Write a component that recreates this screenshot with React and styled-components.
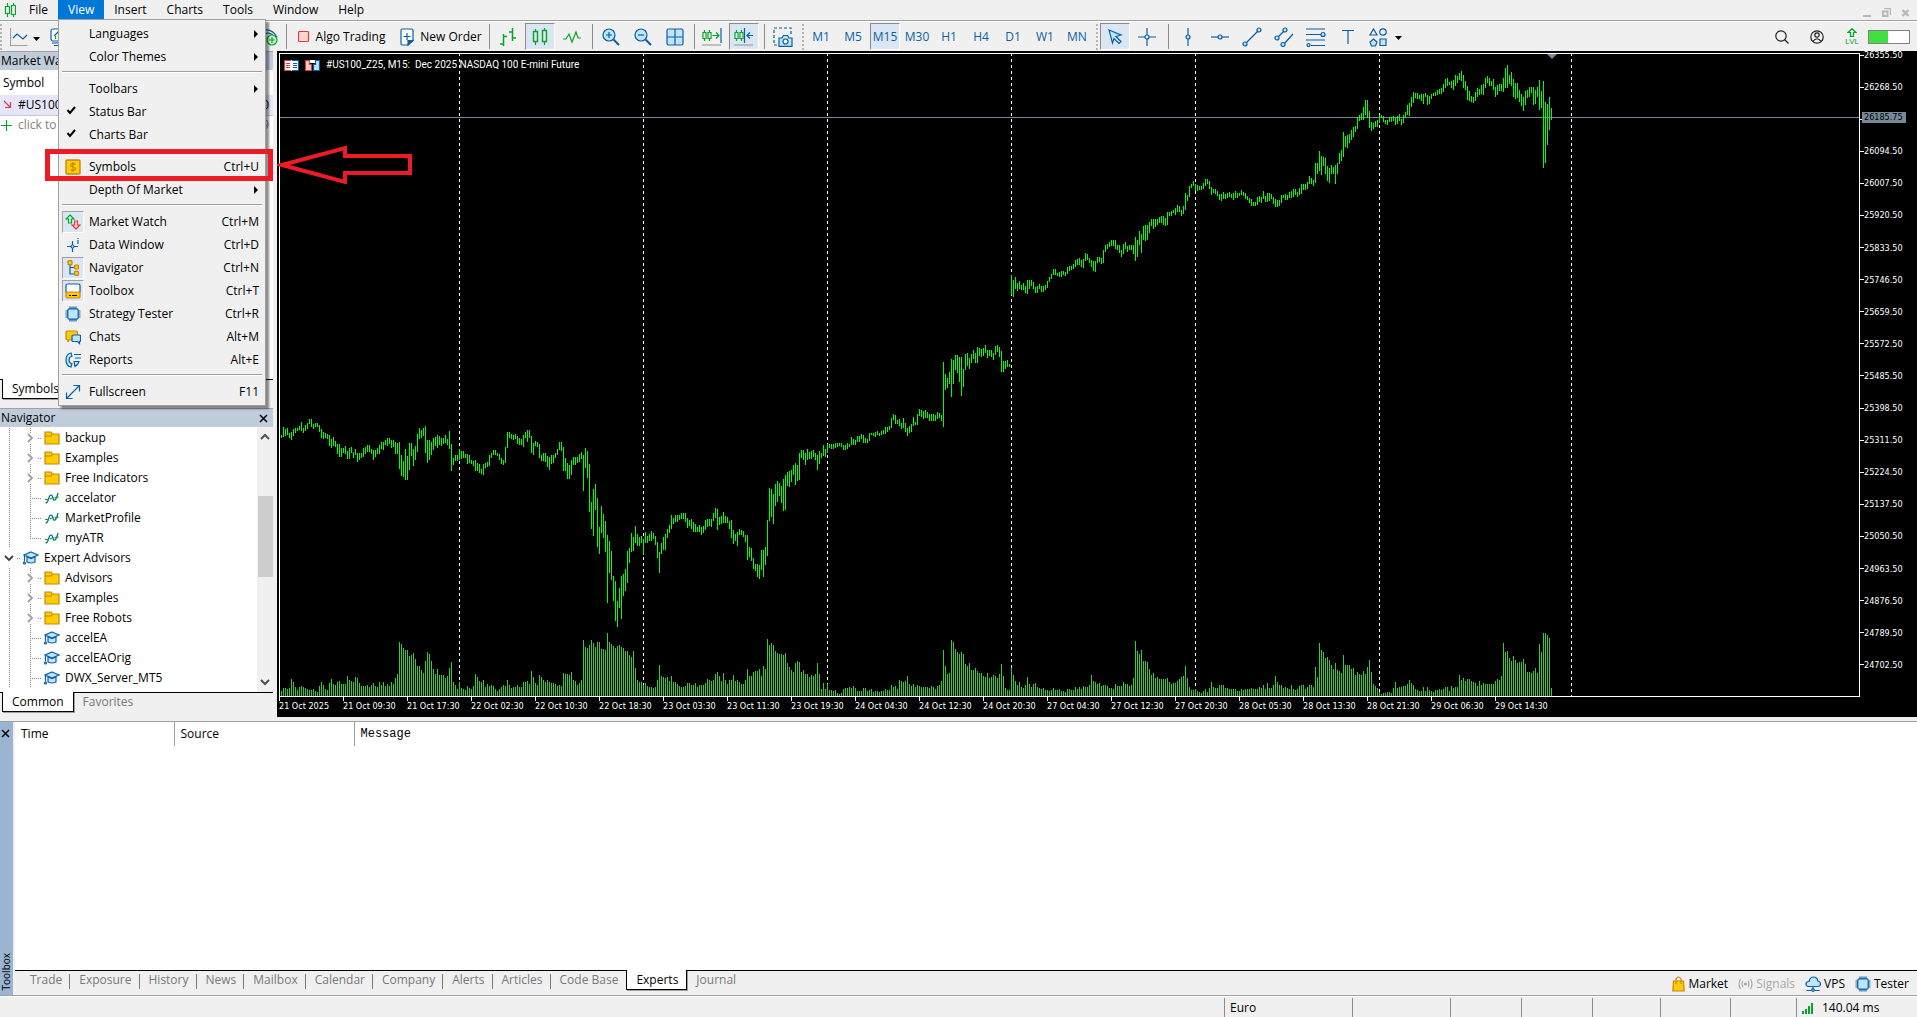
import { useState } from "react"
import styled, { createGlobalStyle, css } from "styled-components"

const BLUE = "#0a5fa5"
const SKY = "#bfe4fd"
const GREEN = "#06a527"
const GOLD = "#ffcc00"
const AMBER = "#c5860f"
const RED = "#dd3c3c"

const GlobalStyle = createGlobalStyle`
    * {
        box-sizing: border-box;
    }

    body {
        margin: 0;
        background: #f0f0f0;
        color: #000000;
        font-family: "Open Sans", "Noto Sans", sans-serif;
        font-size: 12px;
        line-height: 16px;
        overflow: hidden;
    }

    button {
        display: flex;
        align-items: center;
        margin: 0;
        padding: 0;
        border: 0;
        background: none;
        color: inherit;
        font: inherit;
        white-space: nowrap;
    }

    svg {
        display: block;
        flex: none;
    }
`

const StyledApp = styled.div`
    display: flex;
    flex-direction: column;
    width: 100%;
    height: 100vh;
`

const MenuBar = styled.nav`
    position: relative;
    z-index: 2;
    display: flex;
    height: 22px;
    padding-left: 4px;
    border-bottom: 1px solid #ffffff;
    box-shadow: inset 0 -1px 0 #a0a0a0;

    .logo {
        margin: 3px 3px 0 0;
    }

    .windowControls {
        display: flex;
        gap: 10px;
        margin: 4px 7px 0 auto;
    }
`

const MenuEntry = styled.div`
    position: relative;

    > button {
        height: 19px;
        padding: 0 10px;
        background: ${props => props.$open ? "#0078d7" : "none"};
        color: ${props => props.$open ? "#ffffff" : "#000000"};
    }
`

const DropDown = styled.div`
    position: absolute;
    top: 19px;
    left: 0;
    width: 208px;
    padding: 2px 3px;
    border: 1px solid #a0a0a0;
    background: #f0f0f0;
    box-shadow: 3px 3px 2px rgba(0, 0, 0, 0.45);

    hr {
        height: 2px;
        margin: 3px 0 4px;
        border: 0;
        border-top: 1px solid #a0a0a0;
        background: #ffffff;
    }
`

const DropDownItem = styled.button`
    width: 100%;
    height: 23px;
    text-align: left;

    && {
        display: grid;
        grid-template-columns: 21px 1fr auto;
        column-gap: 6px;
        padding-right: 3px;
    }

    .slot {
        display: flex;
        align-items: center;
        justify-content: center;
        width: 22px;
        height: 22px;
        border: 1px solid transparent;

        ${props => props.$pressed && css`
            border-color: #a0a0a0 #ffffff #ffffff #a0a0a0;
            background: #dae6f3;
        `}
    }
`

const ToolBar = styled.div`
    display: flex;
    align-items: center;
    height: 29px;
    color: ${BLUE};

    .start {
        display: flex;
        align-items: center;
        width: 286px;
        gap: 8px;
    }

    .start .signal {
        margin-left: auto;
        margin-right: 8px;
    }

    .end {
        display: flex;
        align-items: center;
        gap: 21px;
        margin: 0 7px 0 auto;
    }
`

const Separator = styled.span`
    width: 1px;
    height: 25px;
    margin: 0 ${props => props.$gap}px;
    background: #8c8c8c;
`

const Grip = styled.span`
    width: 2px;
    height: 26px;
    margin: 0 ${props => props.$gap || 0}px;
    background: repeating-linear-gradient(#b4b4b4 0 2px, transparent 2px 4px);
`

const ToolButton = styled.button`
    justify-content: center;
    width: ${props => props.$width || 30}px;
    height: 27px;
    margin-right: 2px;

    && {
        gap: 6px;
        border: 1px solid transparent;
        color: ${props => props.$dark ? "#000000" : BLUE};

        ${props => props.$active && css`
            border-color: #8c8c8c #ffffff #ffffff #8c8c8c;
            background: #dae6f3;
        `}
    }
`

const Battery = styled.div`
    width: 42px;
    height: 14px;
    margin-left: -12px;
    border: 1px solid #808080;
    background: linear-gradient(90deg, #40e040 48%, #ffffff 48%);
`

const LevelBadge = styled.span`
    display: flex;
    flex-direction: column;
    align-items: center;
    gap: 1px;
    color: ${GREEN};
    font-family: "Liberation Sans", sans-serif;
    font-size: 8px;
    line-height: 8px;
`

const Workspace = styled.main`
    display: flex;
    flex: 1;
    min-height: 0;
`

const SidePanel = styled.aside`
    display: flex;
    flex-direction: column;
    width: 273px;
    margin-right: 4px;
`

const PanelTitle = styled.h2`
    display: flex;
    align-items: center;
    justify-content: space-between;
    height: 19px;
    margin: 0;
    padding: 0 5px 0 1px;
    border-top: 1px solid #a0a0a0;
    background: #bfcddb;
    font-size: 12px;
    font-weight: 400;
`

const MarketWatch = styled.table`
    width: 100%;
    border-collapse: collapse;

    td, th {
        height: 20px;
        padding: 0 4px 0 1px;
        font-weight: 400;
        text-align: left;
        white-space: nowrap;
    }

    th {
        height: 25px;
        padding-left: 3px;
    }

    td:last-child {
        text-align: right;
    }

    .quote {
        border-bottom: 1px solid #c8c8c8;
        background: #e6e6fa;
    }

    .hint {
        color: #808080;
    }

    .symbol {
        display: flex;
        align-items: center;
        gap: 6px;
    }
`

const PanelBody = styled.div`
    display: flex;
    flex-direction: ${props => props.$row ? "row" : "column"};
    flex: ${props => props.$height ? "none" : 1};
    height: ${props => props.$height ? props.$height + "px" : "auto"};
    min-height: 0;
    background: #ffffff;
    overflow: hidden;
`

const SideTabs = styled.div`
    display: flex;
    flex: none;
    height: ${props => props.$height}px;
    background: linear-gradient(#000000 1px, #f0f0f0 1px);
    padding-left: 2px;

    button {
        height: 20px;
        padding: 0 9px;
        color: #787878;
    }

    .current {
        border: 1px solid #000000;
        border-top: 0;
        background: #ffffff;
        color: #000000;
        box-shadow: 1px 1px 0 #a0a0a0;
    }
`

const Tree = styled.ul`
    flex: 1;
    margin: 0;
    padding: 1px 0 0;
    list-style: none;
`

const TreeRow = styled.li`
    display: flex;
    align-items: center;
    height: 20px;

    .name {
        margin-left: 5px;
    }
`

const dotsDown = "repeating-linear-gradient(#888888 0 1px, transparent 1px 2px)"
const dotsAcross = "repeating-linear-gradient(90deg, #888888 0 1px, transparent 1px 2px)"

const Guide = styled.span`
    display: flex;
    align-items: center;
    justify-content: center;
    width: 21px;
    height: 20px;
    padding-right: 3px;
    background-image: ${props => props.$down ? dotsDown : "none"}, ${props => props.$across ? dotsAcross : "none"};
    background-position: 9px 0, ${props => props.$across === "leaf" ? 9 : 17}px 10px;
    background-size: 1px ${props => props.$down === "half" ? "50%" : "100%"}, 12px 1px;
    background-repeat: no-repeat;

    svg {
        background: #ffffff;
    }
`

const ScrollBar = styled.div`
    display: flex;
    flex-direction: column;
    align-items: center;
    justify-content: space-between;
    width: 16px;
    padding: 5px 0;
    background: #f0f0f0;

    .thumb {
        width: 15px;
        height: 81px;
        margin: 54px 0 auto;
        background: #cdcdcd;
    }
`

const Chart = styled.section`
    position: relative;
    display: grid;
    grid-template-columns: 1fr 57px;
    grid-template-rows: 1fr 20px;
    flex: 1;
    min-width: 0;
    padding: 2px 0 0 2px;
    background: #000000;
    color: #ffffff;
    font-family: "DejaVu Sans Condensed", "DejaVu Sans", sans-serif;
    font-size: 9px;
    line-height: 10px;
    overflow: hidden;
`

const Plot = styled.div`
    position: relative;
    border: 1px solid #ffffff;
    min-width: 0;
    overflow: hidden;

    > svg {
        width: 100%;
        height: 100%;
    }
`

const ChartTitle = styled.div`
    position: absolute;
    top: 5px;
    left: 4px;
    display: flex;
    align-items: center;
    gap: 6px;
    white-space: pre;
    font-family: Roboto, sans-serif;
    font-size: 10px;
    line-height: 12px;
`

const PriceAxis = styled.ol`
    display: flex;
    flex-direction: column;
    justify-content: space-between;
    margin: -2px 0 28px;
    padding: 0;
    list-style: none;

    li {
        display: flex;
        align-items: center;
        line-height: 8px;
    }

    li::before {
        content: "";
        width: 4px;
        height: 1px;
        background: #ffffff;
    }
`

const CurrentPrice = styled.output`
    position: absolute;
    top: 61px;
    right: 11px;
    width: 44px;
    height: 11px;
    padding-left: 2px;
    background: #778899;
    color: #000000;
    line-height: 11px;
`

const TimeAxis = styled.ol`
    display: flex;
    margin: 0;
    padding: 0;
    list-style: none;

    li {
        flex: none;
        width: 64px;
        white-space: nowrap;
    }

    li::before {
        content: "";
        display: block;
        width: 1px;
        height: 4px;
        background: #ffffff;
    }
`

const Toolbox = styled.section`
    display: flex;
    height: 275px;
    margin-top: 4px;
    border-top: 1px solid #a0a0a0;
    border-bottom: 1px solid #a0a0a0;

    .side {
        display: flex;
        flex-direction: column;
        align-items: center;
        justify-content: space-between;
        width: 13px;
        margin-right: 2px;
        padding: 7px 2px 5px 0;
        background: #9ab4d1;
    }

    .side span {
        writing-mode: vertical-rl;
        transform: rotate(180deg);
        font-size: 10px;
        line-height: 12px;
    }

    .content {
        display: flex;
        flex-direction: column;
        flex: 1;
        min-width: 0;
        background: #ffffff;
    }
`

const Journal = styled.table`
    width: 100%;
    border-collapse: collapse;
    table-layout: fixed;

    th {
        height: 24px;
        padding: 0 6px;
        border-right: 1px solid #a0a0a0;
        font-weight: 400;
        text-align: left;
    }

    th:nth-child(1) {
        width: 159px;
    }

    th:nth-child(2) {
        width: 180px;
    }

    th:nth-child(3) {
        border: 0;
        font-family: "Liberation Mono", monospace;
    }
`

const ToolboxTabs = styled.div`
    display: flex;
    height: 25px;
    margin-top: auto;
    padding-left: 6px;
    background: linear-gradient(#000000 1px, #f0f0f0 1px);

    .tab {
        height: 20px;
        padding: 0 8px 0 9px;
        color: #787878;
    }

    .tab.current {
        border: 1px solid #000000;
        border-top: 0;
        background: #ffffff;
        color: #000000;
        box-shadow: 1px 1px 0 #a0a0a0;
    }

    .tab:not(.current):not(.last) {
        background: linear-gradient(#787878, #787878) right 4px / 1px 15px no-repeat;
    }

    .services {
        display: flex;
        align-items: center;
        gap: 10px;
        margin-left: auto;
        padding: 2px 8px 0 0;
    }

    .services button {
        gap: 3px;
    }

    .services button:disabled {
        color: #a8a8a8;
    }
`

const StatusBar = styled.footer`
    display: flex;
    justify-content: flex-end;
    height: 21px;
    border-top: 1px solid #ffffff;
`

const StatusCell = styled.div`
    display: flex;
    align-items: center;
    gap: 7px;
    width: ${props => props.$width}px;
    margin-top: 1px;
    padding-left: 5px;
    border-left: 1px solid #8c8c8c;
`

const Marker = styled.div`
    position: absolute;
    top: 149px;
    left: 45px;
    z-index: 3;
    display: flex;
    pointer-events: none;

    .frame {
        width: 228px;
        height: 32px;
        border: 5px solid #ed1c24;
    }

    svg {
        margin: -5px 0 0 4px;
    }
`

const Icon = ({ size = 18, width, stroke = BLUE, fill = "none", children, className }) => (
    <svg className={className} width={width || size} height={size} viewBox={`0 0 ${width || size} ${size}`}
        fill={fill} stroke={stroke} strokeWidth="1.2" aria-hidden="true">
        {children}
    </svg>
)

const icons = {
    logo: <Icon size={14} width={12} stroke={GREEN} className="logo">
        <path d="M3.5 0v14M9.5 0v14"/><path fill="#f0f0f0" d="M1.5 3.5h4v7h-4zM7.5 2.5h4v9h-4z"/>
    </Icon>,
    chartType: <Icon width={32}>
        <path stroke="#a0a0a0" d="M.5 0v17.5h17"/><path d="M3 10l4-4 6 5 4-4"/>
        <path d="M23 9h7l-3.500 4z" fill="#000000" stroke="none"/>
    </Icon>,
    profiles: <Icon><rect x="1" y="1" width="15" height="12" rx="2" fill="#ffffff"/><path d="M2 15h14M4 17.500h10M4 8l5-5"/><path stroke={GREEN} d="M5.500 11V8M8.500 11V6M11.500 11V4"/></Icon>,
    signal: <Icon className="signal">
        <path d="M1 3q10-4 16 6M3 6q8-3 12 4"/>
        <circle cx="12" cy="12" r="5" fill="#cdf5d3" stroke={GREEN}/><path stroke={GREEN} d="M12 9v6M9 12h6"/>
    </Icon>,
    algo: <Icon size={12}><rect x=".5" y=".5" width="10" height="10" rx="1" fill="#ffd9cf" stroke={RED}/></Icon>,
    newOrder: <Icon width={14}>
        <path fill="#ffffff" d="M2.500 1h9a1.500 1.500 0 0 1 1.500 1.500V12l-5 5H2.500A1.500 1.500 0 0 1 1 15.500v-13A1.500 1.500 0 0 1 2.500 1z"/>
        <path d="M7 5v7M3.500 8.500h7"/><path fill={BLUE} d="M8 17v-4.500h5z"/>
    </Icon>,
    bars: <Icon stroke={GREEN}><path strokeWidth="1.500" d="M4.500 6v12M4.500 8.500H8M1 16h3.500M13.500 0v13M10 4h3.500M13.500 10H17"/></Icon>,
    candles: <Icon stroke={GREEN}><path d="M4.500 1v16M13.500 0v17"/><path fill="#dae6f3" strokeWidth="1.400" d="M2.500 3.500h4v10h-4zM11.500 2.500h4v11h-4z"/></Icon>,
    line: <Icon stroke={GREEN}><path d="M0 11h3l3-5 3 8 4-10 2 6h3"/></Icon>,
    zoomIn: <Icon><circle cx="7" cy="7" r="6" fill={SKY}/><path d="M7 4v6M4 7h6"/><path strokeWidth="2" d="M11.500 11.500L17 17"/></Icon>,
    zoomOut: <Icon><circle cx="7" cy="7" r="6" fill={SKY}/><path d="M4 7h6"/><path strokeWidth="2" d="M11.500 11.500L17 17"/></Icon>,
    tile: <Icon><rect x="1" y="1" width="16" height="16" rx="1.500" fill={SKY}/><path d="M9 1v16M1 9h16"/></Icon>,
    autoScroll: <Icon width={20}>
        <path stroke={GREEN} d="M2.500 2v11M7.500 2v11M10.500 7.500H17M14 4.500l3 3-3 3"/><path fill="#ffffff" stroke={GREEN} d="M1 4.500h3v6H1zM6 4.500h3v6H6z"/>
        <path d="M19 0v15"/><path stroke="#a0a0a0" d="M0 17h19"/>
    </Icon>,
    shift: <Icon width={20}>
        <path stroke={GREEN} d="M2.500 2v11M7.500 2v11"/><path fill="#ffffff" stroke={GREEN} d="M1 4.500h3v6H1zM6 4.500h3v6H6z"/>
        <path d="M10.500 0v15M13 7.500h6M16 4.500l-3 3 3 3"/><path stroke="#a0a0a0" d="M0 17h19"/>
    </Icon>,
    camera: <Icon size={20}>
        <path strokeDasharray="3 2" d="M4 18H1V1h17v6"/>
        <path fill={SKY} d="M6 11h3l1.500-2.500h4L16 11h3v8.400H6z"/><circle cx="12.500" cy="14.500" r="2.500" fill="#ffffff"/>
    </Icon>,
    cursor: <Icon size={16}><path fill={SKY} d="M2 1l12 5-5 1.500 5 5-2 2-5-5-1.500 4.500z"/></Icon>,
    crosshair: <Icon><path d="M9 0v7M9 11v7M0 9h7M11 9h7"/><circle cx="9" cy="9" r="2"/></Icon>,
    vLine: <Icon><path d="M9 0v18"/><circle cx="9" cy="9" r="2" fill={SKY}/></Icon>,
    hLine: <Icon><path d="M0 9h18"/><circle cx="9" cy="9" r="2" fill={SKY}/></Icon>,
    trend: <Icon size={20}><path d="M3 17L17 3"/><circle cx="3" cy="17" r="2" fill={SKY}/><circle cx="17" cy="3" r="2" fill={SKY}/></Icon>,
    channel: <Icon size={20}><path d="M3 11l8-8M9 18l10-11"/><circle cx="3" cy="11" r="2" fill={SKY}/><circle cx="11" cy="3" r="2" fill={SKY}/><circle cx="9" cy="17.500" r="2" fill={SKY}/></Icon>,
    fibo: <Icon size={20}><path d="M0 2h19M0 7.500h15M0 13h19M5 18.500h14"/><circle cx="17" cy="7.500" r="2" fill={SKY}/><circle cx="2.500" cy="18" r="1.500" fill={SKY}/></Icon>,
    text: <Icon size={16}><path d="M2 1.500h12M8 1.500V15"/></Icon>,
    shapes: <Icon size={20} width={34}>
        <path d="M4.500 2L8 8H1z"/><circle cx="14" cy="5" r="3.200"/><path fill={SKY} d="M4.500 12l3.500 3-1.500 4h-4L1 15z"/><path fill={SKY} d="M11 12h6v6.500h-6z"/>
        <path d="M26 9h7l-3.500 4z" fill="#000000" stroke="none"/>
    </Icon>,
    search: <Icon size={14} stroke="#202020"><circle cx="6" cy="6" r="5.200"/><path d="M9.500 9.500L13.500 13.500"/></Icon>,
    user: <Icon size={14} stroke="#202020"><circle cx="7" cy="7" r="6.200"/><circle cx="7" cy="5" r="2.200"/><path d="M2.800 11.500Q7 6 11.200 11.500"/></Icon>,
    level: <Icon size={9} width={10} stroke={GREEN}><path fill="#cdf5d3" d="M5 .7L9 4.500H6.500v4h-3v-4H1z"/></Icon>,
    // drop down
    symbols: <Icon size={16}><rect x="1" y="1" width="14" height="14" rx="1" fill={GOLD} stroke={AMBER} strokeWidth="1.400"/><path stroke={AMBER} d="M8 3v10M10.500 5.500C9 4 5.500 4.500 5.500 6.200 5.500 8.500 10.500 7.500 10.500 9.800 10.500 11.500 7 12 5.500 10.500"/></Icon>,
    marketWatch: <Icon size={16}>
        <path fill="#d8f5dc" stroke={GREEN} d="M5 1l4 4H6.500v4h-3V5H1z"/><path fill="#ffd9cf" stroke={RED} d="M11 15l4-4h-2.500V7h-3v4H7z"/>
    </Icon>,
    dataWindow: <Icon size={16}><path d="M7.500 4v4M7.500 11v4M2 9.500h4M9 9.500h4M13 3v4M13 1v1"/><circle cx="7.500" cy="9.500" r="1.500"/></Icon>,
    navigator: <Icon size={16}>
        <path d="M5 4v10h5M5 7.500h5"/><g fill={GOLD} stroke={AMBER}><rect x="3" y=".7" width="4" height="4" rx="1"/><rect x="9.500" y="5" width="4" height="4" rx="1"/><rect x="9.500" y="11.300" width="4" height="4" rx="1"/></g>
    </Icon>,
    toolbox: <Icon size={16}><path fill="#ffffff" d="M1 9V2.500Q1 1 2.500 1h11Q15 1 15 2.500V9"/><path fill={GOLD} stroke={AMBER} d="M1 9h14v4.500Q15 15 13.500 15h-11Q1 15 1 13.500z"/><path stroke="#000000" d="M4 12.500h2M7 12.500h5"/></Icon>,
    chip: <Icon size={16}><path d="M5 .5v15M7 .5v15M9 .5v15M11 .5v15M.5 5h15M.5 7h15M.5 9h15M.5 11h15"/><rect x="2.800" y="2.800" width="10.400" height="10.400" rx="1.500" fill={SKY}/></Icon>,
    chats: <Icon size={16}>
        <path fill={GOLD} stroke={AMBER} d="M2.500 2H11q1.500 0 1.500 1.500v6Q12.500 11 11 11H4l-1 2v-2Q1 11 1 9.500v-6Q1 2 2.500 2z"/>
        <path fill={SKY} d="M8 6h6.500q1 0 1 1v4.500q0 1-1 1v2l-2-2H8q-1 0-1-1V7q0-1 1-1z"/>
    </Icon>,
    reports: <Icon size={16}><path d="M9 2.500h7M10 6h6"/><path fill={SKY} d="M6 1Q1 2 1 8t5 7l1-3Q4 11 4 8t3-4z"/><path fill={SKY} d="M9 9.500h5Q13 13 10 14.500z"/></Icon>,
    fullscreen: <Icon size={16}><path d="M2 14L14 2M8.500 1.500h6v6M1.500 8.500v6h6"/></Icon>,
    check: <Icon size={16} stroke="#000000"><path strokeWidth="2" d="M2.500 6L5 9l5-6"/></Icon>,
    submenu: <Icon size={8} width={6}><path fill="#000000" stroke="none" d="M1 0l4 4-4 4z"/></Icon>,
    // side panels
    close: <Icon size={9} stroke="#000000"><path strokeWidth="1.500" d="M1 1l7 7M8 1L1 8"/></Icon>,
    down: <Icon size={11} stroke={RED}><path d="M3 2l6 6M9.500 3v5.500H4"/></Icon>,
    plus: <Icon size={11} stroke={GREEN}><path d="M5.500 0v11M0 5.500h11"/></Icon>,
    chevron: <Icon size={10} stroke="#a0a0a0"><path strokeWidth="1.800" d="M3 1l4 4-4 4"/></Icon>,
    expanded: <Icon size={10} stroke="#404040"><path strokeWidth="1.800" d="M1 3l4 4 4-4"/></Icon>,
    folder: <Icon size={14} width={16}><path fill={GOLD} stroke={AMBER} d="M1 1h6l1.500 2H15v10H1z"/><path stroke={AMBER} d="M1 5h6l1.500-2"/></Icon>,
    indicator: <Icon size={14} width={16}>
        <path d="M1.500 12q2 0 3-4t2.500-4Q8.500 4 9 7t2 2q1.500-1 3-7"/><path stroke={GREEN} strokeDasharray="4 1" d="M1 8.500h4L8 7l7-1"/>
    </Icon>,
    expert: <Icon size={14} width={16}><path fill={SKY} d="M8 1l7 3-7 3-7-3z"/><path fill={SKY} d="M4 6v5q4 2 8 0V6L8 7.500z"/><path d="M1.500 4.500v6"/><circle cx="1.500" cy="12" r="1"/></Icon>,
    scrollUp: <Icon size={10} stroke="#505050"><path strokeWidth="2" d="M1 7l4-4 4 4"/></Icon>,
    scrollDown: <Icon size={10} stroke="#505050"><path strokeWidth="2" d="M1 3l4 4 4-4"/></Icon>,
    // chart caption
    depth: <Icon size={11} width={15} stroke="none">
        <path fill="#ffffff" d="M0 0h15v11H0z"/>
        <path fill="none" stroke={RED} d="M7 .5H.5v10H7M2 3.500h4M2 5.500h4M2 7.500h4"/><path fill="none" stroke={BLUE} d="M8 .5h6.500v10H8M9 3.500h4M9 5.500h4M9 7.500h4"/>
    </Icon>,
    oneClick: <Icon size={11} width={15} stroke="none">
        <path fill="#ffd0c8" stroke={RED} d="M.5.5h4v4h2v6h-6z"/><path fill={SKY} stroke={BLUE} d="M14.500.5h-4v4h-2v6h6z"/><path fill="#ffffff" d="M5 0h5v3H5z"/>
    </Icon>,
    // toolbox services
    market: <Icon size={16} width={13}><path fill={GOLD} stroke={AMBER} d="M1.500 5h10l.7 10H.8z"/><path stroke={AMBER} d="M4 8V3q2.500-4 5 0v5"/></Icon>,
    signals: <Icon size={12} width={15} stroke="#a8a8a8"><path d="M2.500 1Q-.5 6 2.500 11M5 3Q3 6 5 9M10 3q2 3 0 6M12.500 1q3 5 0 10"/><circle cx="7.500" cy="6" r="1" fill="#a8a8a8"/></Icon>,
    cloud: <Icon size={16}><path fill={SKY} d="M4 10.500q-3 0-3-2.500t3-2.500Q5 1 8.500 1T13 5q2.500.5 2.500 3t-3 2.500z"/><path d="M8 10.500v4M1.500 14.500h5M9.500 14.500h5"/><circle cx="8" cy="14" r="1.300" fill={SKY}/></Icon>,
    strength: <Icon size={13} width={13} stroke={GREEN}><path strokeWidth="2" d="M1 13v-3M4 13V8M7 13V5M10 13V2"/></Icon>
}

const viewMenu = [
    { label: "Languages", more: true },
    { label: "Color Themes", more: true },
    null,
    { label: "Toolbars", more: true },
    { label: "Status Bar", icon: "check" },
    { label: "Charts Bar", icon: "check" },
    null,
    { label: "Symbols", icon: "symbols", keys: "Ctrl+U" },
    { label: "Depth Of Market", more: true },
    null,
    { label: "Market Watch", icon: "marketWatch", keys: "Ctrl+M", pressed: true },
    { label: "Data Window", icon: "dataWindow", keys: "Ctrl+D" },
    { label: "Navigator", icon: "navigator", keys: "Ctrl+N", pressed: true },
    { label: "Toolbox", icon: "toolbox", keys: "Ctrl+T", pressed: true },
    { label: "Strategy Tester", icon: "chip", keys: "Ctrl+R" },
    { label: "Chats", icon: "chats", keys: "Alt+M" },
    { label: "Reports", icon: "reports", keys: "Alt+E" },
    null,
    { label: "Fullscreen", icon: "fullscreen", keys: "F11" }
]

const treeRows = [
    { name: "backup", icon: "folder" },
    { name: "Examples", icon: "folder" },
    { name: "Free Indicators", icon: "folder" },
    { name: "accelator", icon: "indicator" },
    { name: "MarketProfile", icon: "indicator" },
    { name: "myATR", icon: "indicator", last: true },
    { name: "Expert Advisors", icon: "expert", root: true },
    { name: "Advisors", icon: "folder" },
    { name: "Examples", icon: "folder" },
    { name: "Free Robots", icon: "folder" },
    { name: "accelEA", icon: "expert" },
    { name: "accelEAOrig", icon: "expert" },
    { name: "DWX_Server_MT5", icon: "expert" }
]

const timeFrames = ["M1", "M5", "M15", "M30", "H1", "H4", "D1", "W1", "MN"]
const toolboxTabs = ["Trade", "Exposure", "History", "News", "Mailbox", "Calendar", "Company", "Alerts", "Articles", "Code Base", "Experts", "Journal"]
const prices = Array.from({ length: 20 }, (_, i) => (26355.5 - i * 87).toFixed(2))
const times = [
    "21 Oct 2025", "21 Oct 09:30", "21 Oct 17:30", "22 Oct 02:30", "22 Oct 10:30", "22 Oct 18:30", "23 Oct 03:30",
    "23 Oct 11:30", "23 Oct 19:30", "24 Oct 04:30", "24 Oct 12:30", "24 Oct 20:30", "27 Oct 04:30", "27 Oct 12:30",
    "27 Oct 20:30", "28 Oct 05:30", "28 Oct 13:30", "28 Oct 21:30", "29 Oct 06:30", "29 Oct 14:30"
]

// high-low pairs, three units to a pixel, counted down from `top`
const priceRuns = [
    { top: 336, bars: `
        136-144 111-140 117-138 114-135 129-144 126-150 117-138 114-129 114-124 108-121 96-124 114-128 105-124 99-117 87-103 87-111 102-117 99-111 99-111 105-126
        117-144 126-148 129-144 132-147 135-168 147-174 141-168 153-171 162-192 162-201 174-201 174-190 168-192 183-207 174-207 170-190 186-204 177-194 189-216 189-210
        189-204 175-200 171-192 165-186 165-186 177-193 180-210 180-200 174-192 165-191 156-177 156-180 150-165 144-168 144-162 150-174 150-172 156-192 159-192 156-237
        195-258 213-261 177-270 198-270 159-240 159-198 177-228 168-210 132-186 114-147 120-144 114-138 108-189 150-219 150-210 156-195 144-180 141-168 135-174 138-165
        144-168 144-162 135-159 147-165 123-177 162-243 204-225 195-213 195-212 177-210 183-207 183-204 192-204 192-222 195-219 210-222 213-228 210-243 219-243 222-250
        237-252 222-255 219-234 216-231 195-228 189-204 180-195 180-195 189-198 192-210 204-222 210-225 171-219 126-174 126-144 132-147 135-150 132-147 138-162 144-165
        147-165 135-171 126-144 120-156 120-144 138-189 159-195 153-168 156-171 162-204 195-213 189-213 189-216 198-231 201-240 195-222 195-220 189-204 177-195 156-180
        156-183 171-243 204-243 219-267 225-267 210-255 201-225 201-224 201-219 192-216 186-207 195-303 174-234 183-264 222-366 336-417 297-438 282-360 324-471 411-492
        348-429 372-444 393-486 435-639 453-549 483-570 558-633 573-693 633-711 594-654 558-687 552-618 537-603 483-579 474-519 429-486 441-483 408-459 432-468 441-468
        438-459 447-495 426-459 438-459 432-453 423-453 429-447 438-465 456-504 486-549 459-492 441-480 432-480 417-444 405-430 375-417 384-402 375-396 375-396 375-390
        369-387 369-387 369-396 384-414 390-408 387-417 396-426 402-426 411-426 405-426 411-435 408-429 390-420 387-411 387-408 387-411 369-393 354-384 357-420 381-405
        378-402 366-399 378-399 381-399 393-417 390-444 420-462 432-453 426-468 417-435 420-435 423-441 435-456 435-510 471-501 474-513 504-537 522-543 522-561 525-567
        480-540 480-561 471-525 390-498 294-393 297-381 312-402 282-348 273-336 279-318 288-339 267-363 255-360 246-288 243-291 240-276 225-255 219-285 225-273 189-270
        180-204 180-210 189-225 177-209 186-207 183-207 180-201 189-210 195-240 183-222 189-204 165-198 177-201 162-189 162-174 162-176 162-176 159-174 159-171 159-168
        159-170 165-180 164-180 160-177 162-172 141-165 147-165 150-165 138-156 138-156` },
    { top: 186, bars: `
        582-597 585-609 594-609 597-609 579-603 579-585 579-588 577-591 573-585 579-588 573-585 570-582 561-582 561-576 558-570 534-564 522-540 525-552 540-552 537-558
        549-567 534-564 549-576 564-588 558-579 552-576 531-558 546-555 522-555 507-528 510-531 513-537 510-534 516-534 522-543 522-543 522-543 525-543 516-537 519-534
        525-543 366-561 402-450 414-444 396-432 357-471 360-432 345-390 345-399 351-426 351-468 387-441 342-390 339-378 354-387 342-369 330-357 339-369 321-369 324-348
        327-351 324-348 315-339 330-354 330-348 330-351 339-360 318-345 315-336 321-351 333-396 363-396 363-387 360-381 372-381 106-165 120-171 111-148 129-153 123-147
        135-150 129-150 138-159 120-162 120-147 120-138 126-147 141-159 138-159 132-147 138-156 138-156 135-150 123-144 111-126 102-117 87-105 87-105 99-108 96-111
        93-111 93-105 96-108 81-102 78-93 78-90 72-87 60-81 57-75 54-75 60-81 57-84 39-63 42-60 54-69 60-81 63-93 63-96 51-69 51-66
        54-72 30-69 15-36 12-27 6-21 0-18 0-18 0-27 15-30 15-39` },
    { top: 96, bars: `
        301-320 281-312 277-296 289-305 286-301 284-301 286-313 262-334 269-322 244-284 253-308 229-269 226-274 224-269 217-250 208-229 208-236 208-232 208-224 202-220
        199-220 199-224 205-229 187-226 187-199 184-199 181-190 175-196 166-187 169-187 181-199 169-193 129-181 136-153 109-141 103-115 93-109 103-124 105-124 109-121` },
    { top: -4, bars: `
        408-420 399-417 387-408 387-402 393-417 411-435 417-429 417-432 423-438 432-450 432-453 426-447 432-447 429-445 426-441 432-444 429-450 423-444 429-444 429-438
        420-435 426-438 429-447 438-450 444-459 447-468 456-468 456-468 441-465 438-456 441-459 423-447 438-456 429-456 429-453 432-447 441-462 447-471 450-471 450-468
        435-459 435-444 432-450 435-450 426-444 423-444 417-441 417-435 426-441 414-435 402-432 402-420 402-420 396-417 378-402 384-402 390-408 339-399 339-372 303-363
        318-375 321-348 324-372 348-393 354-399 345-372 351-372 345-402 339-372 309-342 300-333 246-321 258-291 255-294 252-279 240-270 231-261 228-246 202-237 195-213
        189-210 171-210 150-195 150-204 183-234 216-243 219-237 213-231 210-231 195-219 195-204 198-216 210-222 210-225 202-216 202-216 198-213 202-225 198-222 192-213
        207-225 195-219 186-204 165-195 159-198 141-171 126-159 129-144 129-147 135-147 132-153 132-162 129-141 135-165 138-162 132-147 129-138 126-138 120-135 117-132
        114-132 102-126 87-114 84-108 96-105 93-114 90-120 75-108 78-99 69-90 63-93 75-114 93-120 108-150 123-153 138-156 141-159 126-153 114-141 117-135
        105-132 102-135 84-114 78-99 84-108 93-108 87-120 111-141 105-135 102-123 102-123 84-126 54-114 45-114 75-102 66-108 87-141 99-147 99-144 120-156
        132-168 141-183 123-165 120-144 111-141 111-129 111-165 120-162 111-141 90-180 123-174 93-354 156-339 162-285 141-240 174-210` }
]

const volumes = [
    5, 8, 8, 7, 8, 17, 14, 9, 6, 9, 10, 9, 8, 7, 6, 6, 7, 5, 4, 10,
    14, 11, 7, 6, 13, 17, 12, 11, 14, 15, 12, 12, 12, 20, 16, 15, 14, 19, 18, 13,
    10, 10, 10, 11, 9, 11, 13, 10, 9, 14, 11, 14, 10, 12, 10, 14, 12, 18, 22, 54,
    52, 48, 46, 46, 40, 41, 43, 37, 30, 30, 26, 23, 35, 44, 42, 35, 27, 22, 27, 21,
    21, 21, 18, 20, 28, 34, 14, 11, 7, 14, 8, 7, 6, 10, 8, 7, 10, 22, 19, 15,
    14, 16, 9, 12, 10, 11, 10, 7, 5, 7, 9, 11, 10, 16, 11, 8, 9, 9, 11, 9,
    9, 14, 14, 15, 12, 25, 19, 13, 11, 21, 19, 16, 14, 16, 14, 13, 13, 12, 10, 11,
    10, 23, 22, 22, 21, 24, 16, 15, 11, 13, 16, 56, 49, 48, 51, 56, 53, 49, 54, 54,
    47, 47, 46, 63, 54, 52, 50, 48, 50, 51, 49, 48, 45, 45, 41, 39, 45, 28, 16, 14,
    14, 11, 13, 10, 9, 9, 8, 9, 16, 31, 20, 19, 18, 19, 15, 20, 14, 14, 12, 10,
    9, 9, 10, 13, 13, 11, 11, 13, 9, 11, 11, 11, 13, 17, 16, 15, 16, 22, 24, 20,
    15, 23, 16, 12, 16, 16, 21, 15, 16, 14, 12, 12, 16, 27, 20, 20, 24, 25, 25, 27,
    20, 30, 27, 57, 51, 53, 51, 45, 43, 42, 42, 41, 43, 33, 29, 26, 24, 33, 35, 34,
    24, 26, 22, 22, 19, 21, 20, 22, 33, 22, 7, 13, 7, 12, 6, 6, 5, 6, 3, 2,
    3, 7, 8, 8, 9, 8, 10, 8, 5, 5,
    5, 8, 8, 5, 6, 7, 4, 5, 5, 4, 5, 5, 7, 6, 6, 11, 9, 10, 7, 16,
    15, 14, 15, 20, 12, 10, 12, 9, 11, 10, 9, 9, 9, 9, 8, 10, 9, 7, 10, 11,
    15, 46, 30, 22, 23, 56, 54, 47, 44, 42, 44, 42, 32, 30, 33, 26, 26, 28, 25, 23,
    23, 20, 19, 23, 18, 19, 21, 20, 18, 22, 32, 20, 8, 6, 6, 28, 21, 15, 11, 14,
    9, 8, 11, 19, 12, 9, 12, 13, 9, 8, 7, 8, 6, 6, 5, 6, 8, 6, 6, 7,
    5, 5, 4, 7, 7, 6, 6, 9, 7, 9, 7, 10, 9, 9, 11, 21, 15, 14, 12, 13,
    10, 11, 11, 10, 8, 8, 7, 12, 10, 10,
    10, 14, 12, 12, 10, 11, 18, 55, 45, 42, 46, 35, 35, 34, 27, 21, 23, 18, 19, 17,
    17, 17, 17, 18, 14, 12, 13, 13, 15, 17, 19, 20, 30, 18, 9, 6, 6, 7, 5, 4,
    3, 5, 7, 4, 8, 14, 9, 8, 8, 11, 11, 11, 8, 8, 7, 7, 7, 7, 5, 5,
    7, 6, 7, 7, 7, 8, 7, 7, 7, 9, 8, 11, 7, 13, 8, 8, 11, 20, 14, 11,
    11, 8, 9, 8, 7, 11, 7, 6, 7, 10, 11, 11, 7, 9, 11, 11, 9, 29, 19, 53,
    46, 44, 38, 39, 36, 31, 27, 33, 26, 25, 23, 41, 31, 31, 31, 27, 28, 21, 24, 22,
    21, 25, 22, 29, 36, 24, 12, 10, 8, 4, 2, 3, 3, 4, 4, 3, 8, 14, 8, 9,
    9, 10, 10, 12, 16, 13, 11, 7, 6, 5, 5, 9, 5, 9, 6, 5, 4, 6, 6, 7,
    6, 7, 9, 9, 5, 10, 8, 9, 9, 21, 16, 18, 15, 17, 17, 15, 14, 13, 10, 15,
    11, 13, 12, 12, 12, 12, 12, 15, 17, 16, 20, 53, 44, 45, 38, 35, 40, 36, 33, 34,
    34, 37, 32, 24, 24, 23, 25, 28, 23, 52, 44, 63, 63, 61, 58, 8
]

const bars = priceRuns.flatMap(run => run.bars.trim().split(/\s+/).map(pair => {
    const [ high, low ] = pair.split("-").map(value => Math.round(run.top + Number(value) / 3))
    return { high, low }
}))

const pricePath = bars.map((bar, i) => `M${i * 2 + 1.5} ${bar.high}V${bar.low}`).join("")
const volumePath = volumes.map((volume, i) => `M${i * 2 + 1.5} 642v-${volume}`).join("")
const dayBreaks = [179, 363, 547, 731, 915, 1099, 1291]

const PriceChart = () => (
    <Chart>
        <Plot>
            <svg role="img" aria-label="#US100_Z25 M15 price chart">
                <path d="M0 63.500H4000" stroke="#778899"/>
                {dayBreaks.map(x => (
                    <path key={x} d={`M${x + 0.5} -1V642`} stroke="#ffffff" strokeDasharray="3 3"/>
                ))}
                <path d={volumePath} stroke="#32cd32"/>
                <path d={pricePath} stroke="#00ff00"/>
                <path d="M1267 0h10l-5 5z" fill="#778899"/>
            </svg>
            <ChartTitle>
                {icons.depth}{icons.oneClick}
                <span>#US100_Z25, M15:  Dec 2025 NASDAQ 100 E-mini Future</span>
            </ChartTitle>
        </Plot>
        <PriceAxis>
            {prices.map(price => <li key={price}>{price === "26181.50" ? "\u00a0" : price}</li>)}
        </PriceAxis>
        <TimeAxis>
            {times.map(time => <li key={time}>{time}</li>)}
        </TimeAxis>
        <CurrentPrice>26185.75</CurrentPrice>
    </Chart>
)

const ViewMenu = () => (
    <DropDown role="menu">
        {viewMenu.map((item, i) => item ?
            <DropDownItem key={item.label} type="button" role="menuitem" $pressed={item.pressed}>
                <span className="slot">{icons[item.icon]}</span>
                <span>{item.label}</span>
                <span>{item.more ? icons.submenu : item.keys}</span>
            </DropDownItem> : <hr key={i}/>
        )}
    </DropDown>
)

const Navigator = () => (
    <Tree>
        {treeRows.map((row, i) => {
            const leaf = row.icon !== "folder"
            return row.root ?
                <TreeRow key={i}>
                    <Guide $across="branch">{icons.expanded}</Guide>
                    <Icon size={2}/>
                    {icons[row.icon]}
                    <span className="name">{row.name}</span>
                </TreeRow> :
                <TreeRow key={i}>
                    <Guide $down="full"/>
                    <Guide $down={row.last ? "half" : "full"} $across={leaf ? "leaf" : "branch"}>{leaf ? "" : icons.chevron}</Guide>
                    <Icon size={2}/>
                    {icons[row.icon]}
                    <span className="name">{row.name}</span>
                </TreeRow>
        })}
    </Tree>
)

const App = () => {

    const [ openMenu, setOpenMenu ] = useState("View")
    const [ timeFrame, setTimeFrame ] = useState("M15")
    const [ toolboxTab, setToolboxTab ] = useState("Experts")

    return (
        <StyledApp>
            <GlobalStyle/>
            <MenuBar>
                {icons.logo}
                {["File", "View", "Insert", "Charts", "Tools", "Window", "Help"].map(name => (
                    <MenuEntry key={name} $open={openMenu === name}>
                        <button type="button" onClick={() => setOpenMenu(openMenu === name ? "" : name)}>{name}</button>
                        {name === "View" && openMenu === "View" ? <ViewMenu/> : ""}
                    </MenuEntry>
                ))}
                <div className="windowControls">
                    <button type="button" aria-label="Minimize"><Icon size={9} stroke="#b8b8b8"><path strokeWidth="2" d="M0 8h8"/></Icon></button>
                    <button type="button" aria-label="Restore"><Icon size={9} stroke="#b8b8b8"><path d="M2 .6h6.400V7"/><path strokeWidth="2" d="M1 3.500h4.500V8H1z"/></Icon></button>
                    <button type="button" aria-label="Close"><Icon size={9} stroke="#b8b8b8"><path strokeWidth="2.400" d="M1.500 2l6 6M7.500 2l-6 6"/></Icon></button>
                </div>
            </MenuBar>

            <ToolBar>
                <div className="start">
                    <Grip/>{icons.chartType}{icons.profiles}{icons.signal}
                </div>
                <Separator $gap={0}/>
                <ToolButton type="button" $dark $width={109}>{icons.algo}Algo Trading</ToolButton>
                <ToolButton type="button" $dark $width={86}>{icons.newOrder}New Order</ToolButton>
                <Separator $gap={3}/>
                <ToolButton type="button" aria-label="Bar chart">{icons.bars}</ToolButton>
                <ToolButton type="button" aria-label="Candlesticks" $active>{icons.candles}</ToolButton>
                <ToolButton type="button" aria-label="Line chart">{icons.line}</ToolButton>
                <Separator $gap={3}/>
                <ToolButton type="button" aria-label="Zoom in">{icons.zoomIn}</ToolButton>
                <ToolButton type="button" aria-label="Zoom out">{icons.zoomOut}</ToolButton>
                <ToolButton type="button" aria-label="Tile windows">{icons.tile}</ToolButton>
                <Separator $gap={2}/>
                <ToolButton type="button" aria-label="Auto scroll">{icons.autoScroll}</ToolButton>
                <ToolButton type="button" aria-label="Chart shift" $active>{icons.shift}</ToolButton>
                <Separator $gap={3}/>
                <ToolButton type="button" aria-label="Screenshot">{icons.camera}</ToolButton>
                <Grip $gap={2}/>
                {timeFrames.map(name => (
                    <ToolButton key={name} type="button" $active={timeFrame === name} onClick={() => setTimeFrame(name)}>{name}</ToolButton>
                ))}
                <Grip $gap={2}/>
                <ToolButton type="button" aria-label="Cursor" $active>{icons.cursor}</ToolButton>
                <ToolButton type="button" aria-label="Crosshair">{icons.crosshair}</ToolButton>
                <Separator $gap={4}/>
                <ToolButton type="button" aria-label="Vertical line">{icons.vLine}</ToolButton>
                <ToolButton type="button" aria-label="Horizontal line">{icons.hLine}</ToolButton>
                <ToolButton type="button" aria-label="Trend line">{icons.trend}</ToolButton>
                <ToolButton type="button" aria-label="Channel">{icons.channel}</ToolButton>
                <ToolButton type="button" aria-label="Fibonacci">{icons.fibo}</ToolButton>
                <ToolButton type="button" aria-label="Text">{icons.text}</ToolButton>
                <ToolButton type="button" aria-label="Shapes" $width={42}>{icons.shapes}</ToolButton>
                <div className="end">
                    <button type="button" aria-label="Search">{icons.search}</button>
                    <button type="button" aria-label="Account">{icons.user}</button>
                    <LevelBadge>{icons.level}LVL</LevelBadge>
                    <Battery/>
                </div>
            </ToolBar>

            <Workspace>
                <SidePanel>
                    <PanelTitle>Market Watch</PanelTitle>
                    <PanelBody $height={309}>
                        <MarketWatch>
                            <thead>
                                <tr><th>Symbol</th><th/></tr>
                            </thead>
                            <tbody>
                                <tr className="quote">
                                    <td><span className="symbol">{icons.down}#US100_Z25</span></td><td>0</td>
                                </tr>
                                <tr className="hint">
                                    <td><span className="symbol">{icons.plus}click to add...</span></td><td>9</td>
                                </tr>
                            </tbody>
                        </MarketWatch>
                    </PanelBody>
                    <SideTabs $height={29}><button type="button" className="current">Symbols</button></SideTabs>
                    <PanelTitle>Navigator{icons.close}</PanelTitle>
                    <PanelBody $row>
                        <Navigator/>
                        <ScrollBar>{icons.scrollUp}<div className="thumb"/>{icons.scrollDown}</ScrollBar>
                    </PanelBody>
                    <SideTabs $height={25}>
                        <button type="button" className="current">Common</button>
                        <button type="button">Favorites</button>
                    </SideTabs>
                </SidePanel>
                <PriceChart/>
            </Workspace>

            <Toolbox>
                <div className="side">{icons.close}<span>Toolbox</span></div>
                <div className="content">
                    <Journal>
                        <thead>
                            <tr><th>Time</th><th>Source</th><th>Message</th></tr>
                        </thead>
                    </Journal>
                    <ToolboxTabs>
                        {toolboxTabs.map((name, i) => (
                            <button key={name} type="button" onClick={() => setToolboxTab(name)}
                                className={`tab ${toolboxTab === name ? "current" : ""} ${i === 9 || i === 11 ? "last" : ""}`}>
                                {name}
                            </button>
                        ))}
                        <div className="services">
                            <button type="button">{icons.market}Market</button>
                            <button type="button" disabled>{icons.signals}Signals</button>
                            <button type="button">{icons.cloud}VPS</button>
                            <button type="button">{icons.chip}Tester</button>
                        </div>
                    </ToolboxTabs>
                </div>
            </Toolbox>

            <StatusBar>
                <StatusCell $width={128}>Euro</StatusCell>
                <StatusCell $width={98}/>
                <StatusCell $width={71}/>
                <StatusCell $width={71}/>
                <StatusCell $width={68}/>
                <StatusCell $width={70}/>
                <StatusCell $width={66}/>
                <StatusCell $width={121}>{icons.strength}140.04 ms</StatusCell>
            </StatusBar>

            <Marker>
                <div className="frame"/>
                <svg width="137" height="42" viewBox="0 0 137 42" fill="none" stroke="#ed1c24" strokeWidth="4">
                    <path d="M5 21L68 4V12H133V29H68V38Z"/>
                </svg>
            </Marker>
        </StyledApp>
    )

}

export default App
